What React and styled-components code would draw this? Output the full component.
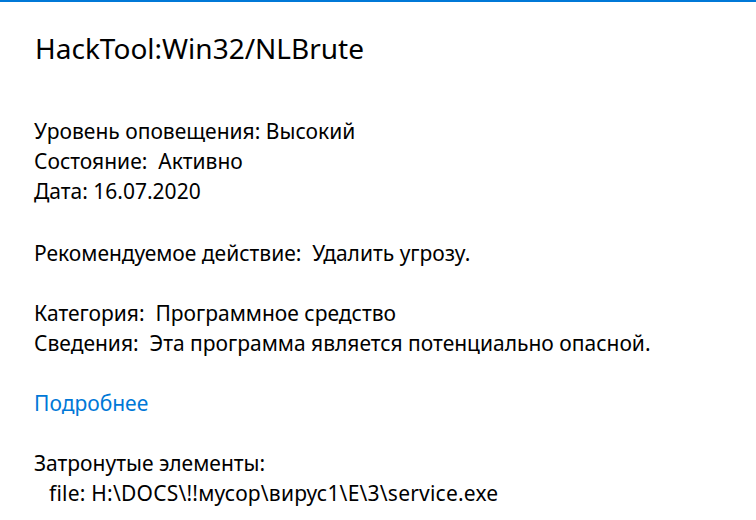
import React from "react";
import styled, { createGlobalStyle } from "styled-components";

const GlobalStyle = createGlobalStyle`
  html, body {
    margin: 0;
    padding: 0;
    background: #fff;
  }
  body {
    font-family: "Noto Sans", "Open Sans", sans-serif;
    color: #000;
  }
`;

const Panel = styled.div`
  width: 756px;
  height: 520px;
  box-sizing: border-box;
  border-top: 2px solid #0078d7;
  padding: 18px 0 0 34px;
  overflow: hidden;
`;

const Title = styled.h1`
  margin: 0 0 40px 1px;
  font-size: 28px;
  font-weight: 400;
  line-height: 56px;
  white-space: nowrap;
`;

const Section = styled.div`
  margin-bottom: ${(p) => p.gap || 30}px;
`;

const Line = styled.div`
  font-size: 21px;
  line-height: 30px;
  white-space: nowrap;
  padding-left: ${(p) => (p.indent ? 15 : 0)}px;
  letter-spacing: ${(p) => (p.indent ? "0.22px" : "normal")};
`;

const MoreLink = styled.a`
  display: block;
  font-size: 21px;
  line-height: 30px;
  color: #0078d7;
  text-decoration: none;
  cursor: pointer;
`;

export default function App() {
  return (
    <>
      <GlobalStyle />
      <Panel>
        <Title>HackTool:Win32/NLBrute</Title>
        <Section gap={32}>
          <Line>Уровень оповещения: Высокий</Line>
          <Line>Состояние:&nbsp; Активно</Line>
          <Line>Дата: 16.07.2020</Line>
        </Section>
        <Section>
          <Line>Рекомендуемое действие:&nbsp; Удалить угрозу.</Line>
        </Section>
        <Section>
          <Line>Категория:&nbsp; Программное средство</Line>
          <Line>Сведения:&nbsp; Эта программа является потенциально опасной.</Line>
        </Section>
        <Section>
          <MoreLink>Подробнее</MoreLink>
        </Section>
        <Section>
          <Line>Затронутые элементы:</Line>
          <Line indent>file: H:\DOCS\!!мусор\вирус1\E\3\service.exe</Line>
        </Section>
      </Panel>
    </>
  );
}
